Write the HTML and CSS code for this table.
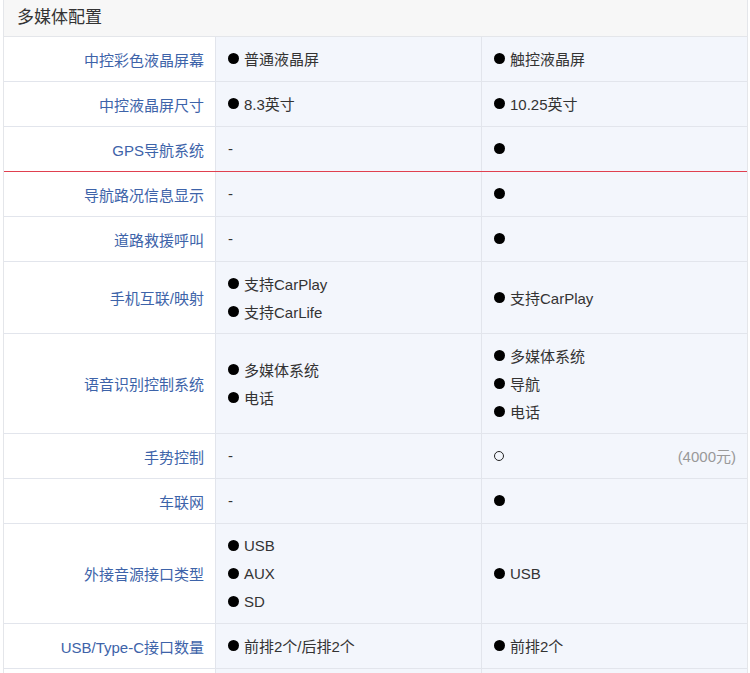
FILE: index.html
```html
<!DOCTYPE html>
<html lang="zh-CN">
<head>
<meta charset="utf-8">
<title>多媒体配置</title>
<link rel="stylesheet" href="styles.css">
</head>
<body>
<div class="panel">
  <div class="head">多媒体配置</div>
  <div class="row">
    <div class="label">中控彩色液晶屏幕</div>
    <div class="val"><div class="item"><span class="dot"></span>普通液晶屏</div></div>
    <div class="val"><div class="item"><span class="dot"></span>触控液晶屏</div></div>
  </div>
  <div class="row">
    <div class="label">中控液晶屏尺寸</div>
    <div class="val"><div class="item"><span class="dot"></span>8.3英寸</div></div>
    <div class="val"><div class="item"><span class="dot"></span>10.25英寸</div></div>
  </div>
  <div class="row marked-next">
    <div class="label">GPS导航系统</div>
    <div class="val"><div class="item">-</div></div>
    <div class="val"><div class="item"><span class="dot"></span></div></div>
  </div>
  <div class="row">
    <div class="label">导航路况信息显示</div>
    <div class="val"><div class="item">-</div></div>
    <div class="val"><div class="item"><span class="dot"></span></div></div>
  </div>
  <div class="row">
    <div class="label">道路救援呼叫</div>
    <div class="val"><div class="item">-</div></div>
    <div class="val"><div class="item"><span class="dot"></span></div></div>
  </div>
  <div class="row">
    <div class="label">手机互联/映射</div>
    <div class="val">
      <div class="item"><span class="dot"></span>支持CarPlay</div>
      <div class="item"><span class="dot"></span>支持CarLife</div>
    </div>
    <div class="val"><div class="item"><span class="dot"></span>支持CarPlay</div></div>
  </div>
  <div class="row">
    <div class="label">语音识别控制系统</div>
    <div class="val">
      <div class="item"><span class="dot"></span>多媒体系统</div>
      <div class="item"><span class="dot"></span>电话</div>
    </div>
    <div class="val">
      <div class="item"><span class="dot"></span>多媒体系统</div>
      <div class="item"><span class="dot"></span>导航</div>
      <div class="item"><span class="dot"></span>电话</div>
    </div>
  </div>
  <div class="row">
    <div class="label">手势控制</div>
    <div class="val"><div class="item">-</div></div>
    <div class="val"><div class="item opt"><span class="ring"></span><span class="price">(4000元)</span></div></div>
  </div>
  <div class="row">
    <div class="label">车联网</div>
    <div class="val"><div class="item">-</div></div>
    <div class="val"><div class="item"><span class="dot"></span></div></div>
  </div>
  <div class="row">
    <div class="label">外接音源接口类型</div>
    <div class="val">
      <div class="item"><span class="dot"></span>USB</div>
      <div class="item"><span class="dot"></span>AUX</div>
      <div class="item"><span class="dot"></span>SD</div>
    </div>
    <div class="val"><div class="item"><span class="dot"></span>USB</div></div>
  </div>
  <div class="row">
    <div class="label">USB/Type-C接口数量</div>
    <div class="val"><div class="item"><span class="dot"></span>前排2个/后排2个</div></div>
    <div class="val"><div class="item"><span class="dot"></span>前排2个</div></div>
  </div>
  <div class="row">
    <div class="label"></div>
    <div class="val"></div>
    <div class="val"></div>
  </div>
</div>
</body>
</html>
```

FILE: styles.css
```css
html, body {
  margin: 0;
  padding: 0;
  background: #ffffff;
}
body {
  font-family: "Liberation Sans", "Noto Sans CJK SC", sans-serif;
  font-size: 15px;
  color: #333333;
  overflow: hidden;
  height: 673px;
}
.panel {
  margin-left: 3px;
  width: 745px;
  border-left: 1px solid #e4e6ea;
  border-right: 1px solid #e4e6ea;
  box-sizing: border-box;
}
.head {
  height: 36px;
  line-height: 35px;
  background: #f7f7f7;
  border-bottom: 1px solid #e4e6ea;
  padding-left: 13px;
  font-size: 17px;
  color: #333333;
}
.row {
  display: grid;
  grid-template-columns: 211px 266px 1fr;
  grid-auto-rows: minmax(44px, auto);
  border-bottom: 1px solid #e2e5ec;
}
.row.marked-next {
  border-bottom: 1px solid #e0404f;
}
.label {
  display: flex;
  align-items: center;
  justify-content: flex-end;
  padding-right: 11px;
  color: #3d63a9;
  background: #ffffff;
}
.val {
  display: flex;
  flex-direction: column;
  justify-content: center;
  padding: 7px 11px 8px 12px;
  background: #f3f6fc;
  border-left: 1px solid #e2e5ec;
}
.item {
  display: flex;
  align-items: center;
  height: 28px;
  color: #333333;
}
.dot {
  width: 11px;
  height: 11px;
  border-radius: 50%;
  background: #000000;
  margin-right: 5px;
  flex: none;
}
.ring {
  width: 8px;
  height: 8px;
  border-radius: 50%;
  border: 1.5px solid #222222;
  flex: none;
}
.opt {
  justify-content: space-between;
}
.price {
  color: #999999;
}
```
